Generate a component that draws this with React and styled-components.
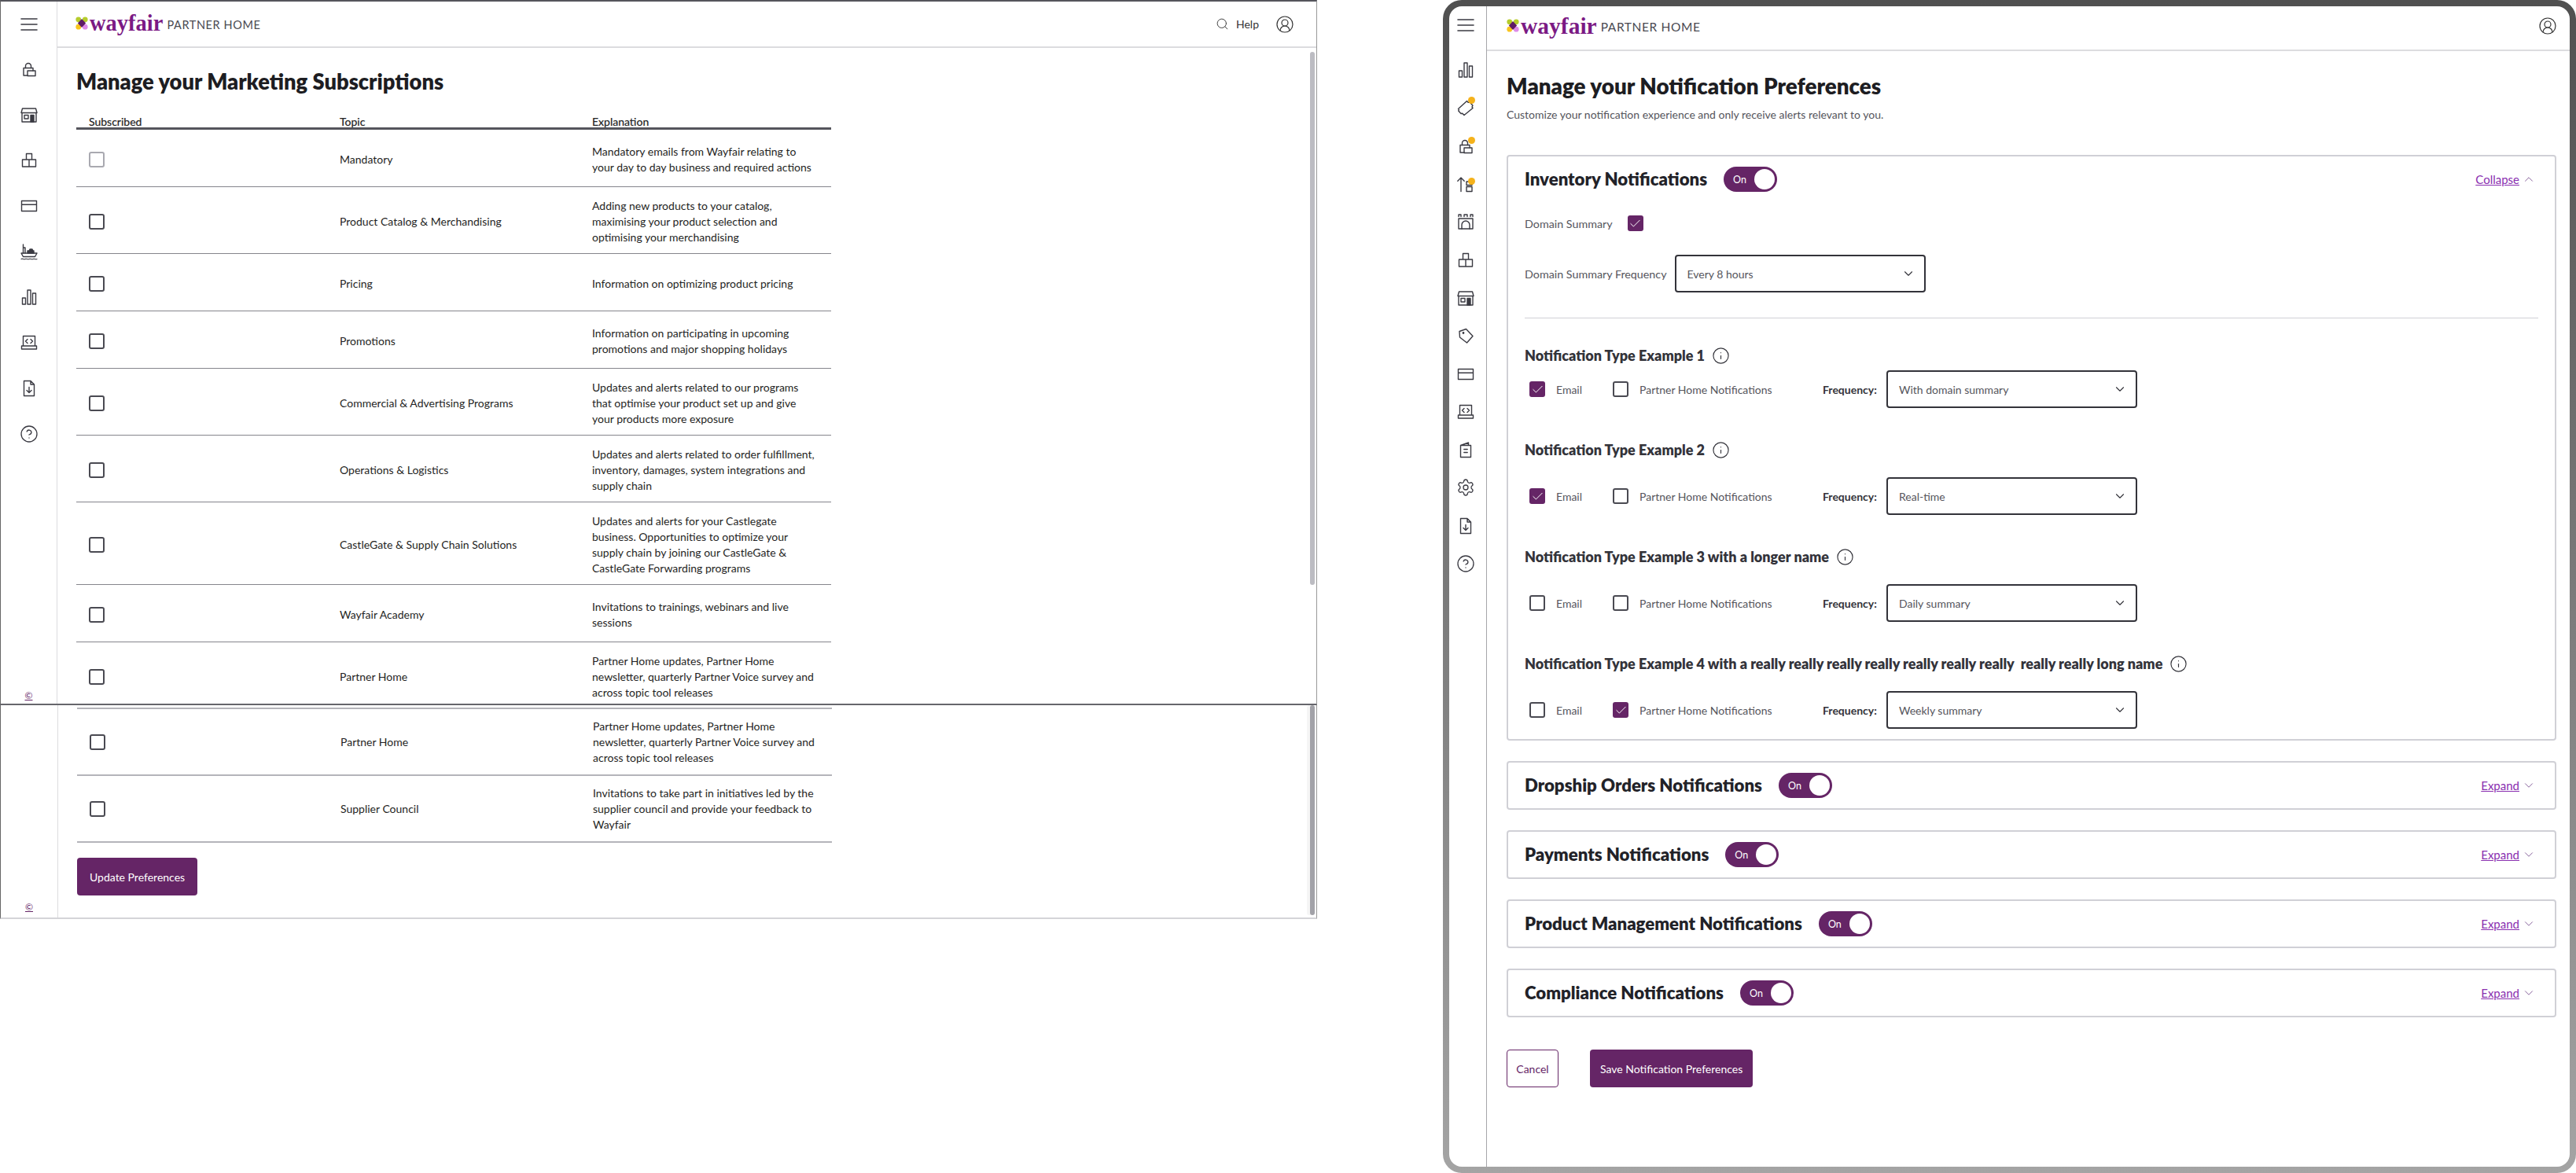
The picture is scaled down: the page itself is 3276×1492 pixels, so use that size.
import React from 'react';
import styled, { createGlobalStyle } from 'styled-components';
import { Check, ChevronDown, ChevronUp, CircleHelp, CircleUserRound, Info, Search, Settings } from 'lucide-react';

const PURPLE = '#652566';

const GlobalStyle = createGlobalStyle`
  html, body { margin: 0; padding: 0; background: #fff; }
  body { font-family: Lato, "Open Sans", sans-serif; color: #222; }
  * { box-sizing: border-box; }
`;

const Page = styled.div`
  width: 3276px;
  height: 1492px;
  display: flex;
  justify-content: space-between;
  align-items: flex-start;
  overflow: hidden;
`;

/* ---------- left screenshot ---------- */

const LeftColumn = styled.div`
  width: 1675px;
  display: flex;
  flex-direction: column;
`;

const Shot = styled.section`
  position: relative;
  height: ${p => p.$height}px;
  display: flex;
  overflow: hidden;
  border-left: 1px solid #666;
  border-right: 1px solid #999;
  border-top: ${p => p.$top};
  border-bottom: ${p => p.$bottom};
`;

const ScrollThumb = styled.div`
  position: absolute;
  right: 2px;
  top: ${p => p.$top}px;
  bottom: ${p => p.$bottom}px;
  width: 6px;
  border-radius: 3px;
  background: ${p => p.$color};
  box-shadow: ${p => p.$track ? '-4px 0 0 #f5f5f5' : 'none'};
`;

const Rail = styled.nav`
  width: ${p => p.$width}px;
  flex: none;
  display: flex;
  flex-direction: column;
  align-items: center;
  border-right: ${p => p.$border};
  padding-right: ${p => p.$shift || 0}px;
`;

const RailHead = styled.div`
  height: ${p => p.$height}px;
  margin-bottom: ${p => p.$after || 0}px;
  display: flex;
  align-items: center;
`;

const RailSlot = styled.div`
  position: relative;
  height: ${p => p.$step}px;
  display: flex;
  align-items: center;
  justify-content: center;
  color: #3a3a42;
`;

const Dot = styled.span`
  position: absolute;
  top: ${p => p.$top}px;
  right: 0;
  width: 9px;
  height: 9px;
  border-radius: 50%;
  background: #f5b21b;
`;

const Copyright = styled.a`
  margin-top: auto;
  margin-bottom: ${p => p.$bottom}px;
  font-size: 12px;
  line-height: 14px;
  color: ${PURPLE};
  text-decoration: underline;
`;

const Main = styled.div`
  flex: 1;
  min-width: 0;
  display: flex;
  flex-direction: column;
`;

const TopBar = styled.header`
  height: ${p => p.$height}px;
  flex: none;
  display: flex;
  align-items: center;
  justify-content: space-between;
  padding: ${p => p.$padding};
  border-bottom: 2px solid #dcdcdf;
`;

const Logo = styled.div`
  display: flex;
  align-items: center;
  margin-bottom: ${p => p.$lift}px;
`;

const Wordmark = styled.span`
  font-family: "Liberation Serif", serif;
  font-weight: 700;
  font-size: ${p => p.$size}px;
  line-height: 24px;
  color: #7b1a84;
  margin-left: 2px;
`;

const LogoSub = styled.span`
  font-size: ${p => p.$size}px;
  letter-spacing: 0.6px;
  color: #4a4a52;
  margin-left: 5px;
  margin-top: 3px;
`;

const TopActions = styled.div`
  display: flex;
  align-items: center;
  color: #333;
  font-size: 14px;
`;

const HelpLabel = styled.span`
  margin: 0 21px 0 9px;
`;

const AccountIcon = styled.span`
  display: flex;
  color: #333;
  margin-bottom: ${p => p.$lift || 0}px;
`;

const TablePane = styled.div`
  padding: ${p => p.$padding};
`;

const MarketingTitle = styled.h1`
  margin: 0;
  font-size: 27.3px;
  line-height: 34px;
  font-weight: 800;
  color: #1d1d22;
`;

const TableHead = styled.div`
  width: 960px;
  margin-top: 26px;
  display: grid;
  grid-template-columns: 319px 321px 1fr;
  padding-left: 16px;
  font-size: 14px;
  line-height: 15px;
  color: #222;
  border-bottom: 3px solid #55555c;
  -webkit-text-stroke: 0.2px #222;
`;

const TableRow = styled.div`
  width: 960px;
  min-height: 73px;
  display: grid;
  grid-template-columns: 319px 321px 1fr;
  align-items: center;
  padding: ${p => p.$soft ? '12px 0 11px 16px' : '14px 0 10px 16px'};
  font-size: 14px;
  line-height: 20px;
  color: #1f1f24;
  border-bottom: ${p => p.$soft ? '2px solid #b4b4ba' : '1px solid #85858c'};
`;

const SoftRule = styled.div`
  width: 960px;
  border-top: 2px solid #b4b4ba;
`;

const Explanation = styled.div`
  max-width: 288px;
`;

const PrimaryButton = styled.button`
  height: 48px;
  padding: 0 ${p => p.$pad}px;
  border: none;
  border-radius: 4px;
  background: ${PURPLE};
  color: #fff;
  font-family: inherit;
  font-size: 14px;
`;

const UpdateButton = styled(PrimaryButton)`
  display: block;
  margin-top: 19px;
`;

const Box = styled.span`
  width: 20px;
  height: 20px;
  flex: none;
  display: inline-flex;
  align-items: center;
  justify-content: center;
  border-radius: 3px;
  border: ${p => p.$checked ? 'none' : `2px solid ${p.$muted ? '#a9a9b0' : '#4a4a52'}`};
  background: ${p => p.$checked ? PURPLE : '#fff'};
  color: #fff;
`;

/* ---------- right screenshot ---------- */

const Device = styled.section`
  width: 1441px;
  height: 1492px;
  padding: 8px;
  border-radius: 24px;
  background: linear-gradient(#505050, #a4a4a4);
`;

const Screen = styled.div`
  height: 100%;
  display: flex;
  overflow: hidden;
  border-radius: 16px;
  background: #fff;
`;

const PrefsPane = styled.div`
  padding: 27px 17px 0 25px;
`;

const PrefsTitle = styled.h1`
  margin: 0;
  font-size: 27.8px;
  line-height: 36px;
  font-weight: 800;
  color: #1d1d22;
`;

const PrefsIntro = styled.p`
  margin: 8px 0 41px;
  font-size: 14px;
  line-height: 20px;
  color: #55555c;
`;

const Card = styled.div`
  margin-bottom: 26px;
  padding: 13px 21px;
  border: 2px solid #d0d0d6;
  border-radius: 4px;
`;

const CardHead = styled.div`
  display: flex;
  align-items: center;
`;

const CardTitle = styled.h2`
  margin: 0 21px 0 0;
  font-size: 22.2px;
  line-height: 32px;
  font-weight: 800;
  color: #222228;
`;

const Toggle = styled.span`
  width: 68px;
  height: 32px;
  display: flex;
  align-items: center;
  justify-content: space-between;
  padding: 0 3px 0 12px;
  border-radius: 16px;
  background: ${PURPLE};
  color: #fff;
  font-size: 12.5px;
`;

const Knob = styled.span`
  width: 26px;
  height: 26px;
  border-radius: 50%;
  background: #fff;
`;

const CardLink = styled.a`
  margin-left: auto;
  margin-right: 3px;
  display: flex;
  align-items: center;
  gap: 3px;
  color: #86609a;
`;

const LinkText = styled.span`
  font-size: 15px;
  color: #8a2fb0;
  text-decoration: underline;
`;

const FieldLine = styled.div`
  margin-top: ${p => p.$gap}px;
  display: flex;
  align-items: center;
  gap: ${p => p.$inner}px;
  font-size: 14.3px;
  color: #55555c;
`;

const Select = styled.div`
  width: 319px;
  height: 48px;
  flex: none;
  display: flex;
  align-items: center;
  justify-content: space-between;
  padding: 0 11px 0 14px;
  border: 2px solid #33333a;
  border-radius: 4px;
  font-size: 14px;
  color: #55555c;
`;

const Rule = styled.hr`
  margin: 32px 0 0;
  border: none;
  border-top: 1px solid #d0d0d6;
`;

const TypeGroup = styled.div`
  margin-top: ${p => p.$first ? 35 : 41}px;
`;

const TypeTitle = styled.h3`
  margin: 0 0 ${p => p.$first ? 7 : 23}px;
  display: flex;
  align-items: center;
  gap: 9px;
  font-size: 18px;
  line-height: 24px;
  font-weight: 800;
  color: #33333a;
  white-space: pre;
`;

const TypeRow = styled.div`
  display: grid;
  grid-template-columns: 106px 267px 81px 319px;
  align-items: center;
  padding-left: 6px;
`;

const CheckOption = styled.label`
  display: flex;
  align-items: center;
  gap: 14px;
  font-size: 14px;
  color: #55555c;
`;

const FreqLabel = styled.span`
  font-size: 14px;
  font-weight: 700;
  color: #33333a;
`;

const ActionRow = styled.div`
  display: flex;
  gap: 40px;
  margin-top: 41px;
`;

const CancelButton = styled.button`
  height: 48px;
  width: 66px;
  background: #fff;
  border: 1px solid ${PURPLE};
  border-radius: 4px;
  color: ${PURPLE};
  font-family: inherit;
  font-size: 14px;
`;

/* ---------- drawings ---------- */

const Svg = ({ size = 24, children }) => (
  <svg width={size} height={size} viewBox="0 0 24 24" fill="none" stroke="currentColor" strokeWidth="1.4" strokeLinejoin="round" strokeLinecap="round">
    {children}
  </svg>
);

const drawings = {
  menu: <path d="M2 5h20M2 12h20M2 19h20" strokeWidth="1.6" />,
  bars: <path d="M3.5 13h4v8h-4zM10 3h4v18h-4zM16.500 7h4v14h-4z" />,
  lockbox: (
    <>
      <path d="M10 20H5V10.500h12V14" />
      <path d="M7.500 10.500V8a3.500 3.500 0 0 1 7 0v2.500" />
      <path d="M10 14h10v6.500H10z" />
    </>
  ),
  store: (
    <>
      <path d="M3.500 4h17L22 9.500H2z" />
      <path d="M3 9.500V21h18V9.500" />
      <path d="M6 12.500h5V17H6z" />
      <path d="M14 12.500h4V21h-4z" fill="currentColor" />
    </>
  ),
  boxes: <path d="M8.500 3.500h7V11h-7zM3.500 11H12v9H3.500zM12 11h8.500v9H12z" />,
  card: <path d="M2.500 5.500h19v13h-19zM2.500 10.200h19" />,
  ship: (
    <>
      <path d="M4.500 3v11M4.500 7H7v7" />
      <path d="M2 14h20l-2.500 4.500h-15z" />
      <path d="M10 14v-3h2l1-2h3l1 2h1v3z" fill="currentColor" />
      <path d="M2 21.500c2-1.400 3 1 5 0s3 1 5 0 3 1 5 0 3 1 5 0" strokeWidth="1.100" />
    </>
  ),
  laptop: <path d="M4.500 3.500h15V16h-15zM2.500 16h19v4h-19zM10 7.500l-2.500 2.500 2.500 2.500M14 7.500l2.500 2.500-2.500 2.500" />,
  filedown: <path d="M5.500 2.500H14l4.500 4.500v14.500h-13zM14 2.500V7h4.500M12 10.500v7M9 14.500l3 3 3-3" />,
  ticket: <path d="M2.500 13.500L13.500 3.500l1.800 1.900 2-.4 3.700 4.200-1 1.800 1 1.500L10 21.500 7.800 19.200 6 19.500 2.800 16l.7-1.500z" />,
  arrowstack: <path d="M6 21.500V4M1.800 8.200L6 4l4.200 4.200M13 9h7v4.500h-7zM13 15.500h7v6h-7z" />,
  castle: (
    <>
      <path d="M3 3v2.500M6 3v2.500M3 3h3M10 3v2.500M14 3v2.500M10 3h4M18 3v2.500M21 3v2.500M18 3h3" />
      <path d="M3 8h18v13H3z" />
      <path d="M7 21v-5a5 5 0 0 1 10 0v5" />
    </>
  ),
  tag: (
    <>
      <path d="M4 6.500L12.500 3.500 21 12.500l-7.500 8.500L4.500 14z" />
      <circle cx="9" cy="8.500" r=".7" fill="currentColor" />
    </>
  ),
  notes: <path d="M5.500 6.500l10-3.500v3.500M5.500 6.500h13v15h-13zM9.800 11.500h4.400M9.800 15.500h4.400" />,
};

const Glyph = ({ name }) => {
  if (name === 'gear') return <Settings size={24} strokeWidth={1.3} />;
  if (name === 'help') return <CircleHelp size={24} strokeWidth={1.3} />;
  return <Svg>{drawings[name]}</Svg>;
};

const LogoMark = () => (
  <svg width="16" height="17" viewBox="0 0 17 18">
    <circle cx="4" cy="4" r="3.600" fill="#b6cc2c" />
    <circle cx="13" cy="4" r="3.600" fill="#b6cc2c" />
    <circle cx="4" cy="14" r="3.600" fill="#f9c51e" />
    <circle cx="13" cy="14" r="3.600" fill="#dd8be8" />
    <path d="M8.500 3.200L14 9l-5.500 5.800L3 9z" fill="#5d1a66" />
  </svg>
);

const Brand = ({ word, sub, lift }) => (
  <Logo $lift={lift}>
    <LogoMark />
    <Wordmark $size={word}>wayfair</Wordmark>
    <LogoSub $size={sub}>PARTNER HOME</LogoSub>
  </Logo>
);

const CheckBox = ({ checked, muted }) => (
  <Box $checked={checked} $muted={muted}>
    {checked && <Check size={17} strokeWidth={1.4} />}
  </Box>
);

/* ---------- data ---------- */

const topRows = [
  ['Mandatory', 'Mandatory emails from Wayfair relating to your day to day business and required actions', true],
  ['Product Catalog & Merchandising', 'Adding new products to your catalog, maximising your product selection and optimising your merchandising'],
  ['Pricing', 'Information on optimizing product pricing'],
  ['Promotions', 'Information on participating in upcoming promotions and major shopping holidays'],
  ['Commercial & Advertising Programs', 'Updates and alerts related to our programs that optimise your product set up and give your products more exposure'],
  ['Operations & Logistics', 'Updates and alerts related to order fulfillment, inventory, damages, system integrations and supply chain'],
  ['CastleGate & Supply Chain Solutions', 'Updates and alerts for your Castlegate business. Opportunities to optimize your supply chain by joining our CastleGate & CastleGate Forwarding programs'],
  ['Wayfair Academy', 'Invitations to trainings, webinars and live sessions'],
  ['Partner Home', 'Partner Home updates, Partner Home newsletter, quarterly Partner Voice survey and across topic tool releases'],
];

const bottomRows = [
  ['Partner Home', 'Partner Home updates, Partner Home newsletter, quarterly Partner Voice survey and across topic tool releases'],
  ['Supplier Council', 'Invitations to take part in initiatives led by the supplier council and provide your feedback to Wayfair'],
];

const leftIcons = ['lockbox', 'store', 'boxes', 'card', 'ship', 'bars', 'laptop', 'filedown', 'help'];

const rightIcons = [
  ['bars'], ['ticket', 1], ['lockbox', 3], ['arrowstack', 7], ['castle'], ['boxes'], ['store'], ['tag'],
  ['card'], ['laptop'], ['notes'], ['gear'], ['filedown'], ['help'],
];

const types = [
  { title: 'Notification Type Example 1', email: true, home: false, freq: 'With domain summary' },
  { title: 'Notification Type Example 2', email: true, home: false, freq: 'Real-time' },
  { title: 'Notification Type Example 3 with a longer name', email: false, home: false, freq: 'Daily summary' },
  { title: 'Notification Type Example 4 with a really really really really really really really  really really long name', email: false, home: true, freq: 'Weekly summary' },
];

const closedCards = ['Dropship Orders Notifications', 'Payments Notifications', 'Product Management Notifications', 'Compliance Notifications'];

const Row = ({ topic, text, muted, soft }) => (
  <TableRow $soft={soft}>
    <CheckBox muted={muted} />
    <div>{topic}</div>
    <Explanation>{text}</Explanation>
  </TableRow>
);

const SectionHead = ({ title, open }) => (
  <CardHead>
    <CardTitle>{title}</CardTitle>
    <Toggle>On<Knob /></Toggle>
    <CardLink>
      <LinkText>{open ? 'Collapse' : 'Expand'}</LinkText>
      {open ? <ChevronUp size={18} strokeWidth={1.3} /> : <ChevronDown size={18} strokeWidth={1.3} />}
    </CardLink>
  </CardHead>
);

const FrequencySelect = ({ value }) => (
  <Select>
    {value}
    <ChevronDown size={18} strokeWidth={1.5} color="#33333a" />
  </Select>
);

export default function App() {
  return (
    <Page>
      <GlobalStyle />
      <LeftColumn>
        <Shot $height={897} $top="2px solid #55555c" $bottom="2px solid #66666c">
          <ScrollThumb $top={64} $bottom={151} $color="#bcbcc2" />
          <Rail $width={72} $border="1px solid #dcdcdf">
            <RailHead $height={57}><RailSlot $step={57}><Glyph name="menu" /></RailSlot></RailHead>
            {leftIcons.map(name => (
              <RailSlot key={name} $step={58}><Glyph name={name} /></RailSlot>
            ))}
            <Copyright $bottom={3}>©</Copyright>
          </Rail>
          <Main>
            <TopBar $height={59} $padding="0 28px 0 23px">
              <Brand word={28.5} sub={14.5} lift={2} />
              <TopActions>
                <Search size={17} strokeWidth={1.3} />
                <HelpLabel>Help</HelpLabel>
                <AccountIcon><CircleUserRound size={24} strokeWidth={1.2} /></AccountIcon>
              </TopActions>
            </TopBar>
            <TablePane $padding="26px 0 0 24px">
              <MarketingTitle>Manage your Marketing Subscriptions</MarketingTitle>
              <TableHead>
                <div>Subscribed</div>
                <div>Topic</div>
                <div>Explanation</div>
              </TableHead>
              {topRows.map(([topic, text, muted]) => (
                <Row key={topic} topic={topic} text={text} muted={muted} />
              ))}
            </TablePane>
          </Main>
        </Shot>
        <Shot $height={272} $top="none" $bottom="2px solid #d4d4d8">
          <ScrollThumb $top={0} $bottom={3} $color="#a2a2a8" $track />
          <Rail $width={73} $border="1px solid #dcdcdf">
            <Copyright $bottom={6}>©</Copyright>
          </Rail>
          <Main>
            <TablePane $padding="3px 0 0 24px">
              <SoftRule />
              {bottomRows.map(([topic, text]) => (
                <Row key={topic} topic={topic} text={text} soft />
              ))}
              <UpdateButton $pad={16}>Update Preferences</UpdateButton>
            </TablePane>
          </Main>
        </Shot>
      </LeftColumn>

      <Device>
        <Screen>
          <Rail $width={48} $border="1px solid #a6a6aa" $shift={6}>
            <RailHead $height={48} $after={9}><RailSlot $step={48}><Glyph name="menu" /></RailSlot></RailHead>
            {rightIcons.map(([name, dotTop]) => (
              <RailSlot key={name} $step={48.3}>
                <Glyph name={name} />
                {dotTop !== undefined && <Dot $top={dotTop + 9} />}
              </RailSlot>
            ))}
          </Rail>
          <Main>
            <TopBar $height={57} $padding="0 16px 0 25px">
              <Brand word={29.5} sub={15.5} lift={6} />
              <AccountIcon $lift={6}><CircleUserRound size={24} strokeWidth={1.2} /></AccountIcon>
            </TopBar>
            <PrefsPane>
              <PrefsTitle>Manage your Notification Preferences</PrefsTitle>
              <PrefsIntro>Customize your notification experience and only receive alerts relevant to you.</PrefsIntro>
              <Card>
                <SectionHead title="Inventory Notifications" open />
                <FieldLine $gap={30} $inner={19}>
                  Domain Summary
                  <CheckBox checked />
                </FieldLine>
                <FieldLine $gap={30} $inner={10}>
                  Domain Summary Frequency
                  <FrequencySelect value="Every 8 hours" />
                </FieldLine>
                <Rule />
                {types.map((t, i) => (
                  <TypeGroup key={t.title} $first={i === 0}>
                    <TypeTitle $first={i === 0}>
                      {t.title}
                      <Info size={23} strokeWidth={1.2} />
                    </TypeTitle>
                    <TypeRow>
                      <CheckOption><CheckBox checked={t.email} />Email</CheckOption>
                      <CheckOption><CheckBox checked={t.home} />Partner Home Notifications</CheckOption>
                      <FreqLabel>Frequency:</FreqLabel>
                      <FrequencySelect value={t.freq} />
                    </TypeRow>
                  </TypeGroup>
                ))}
              </Card>
              {closedCards.map(title => (
                <Card key={title}>
                  <SectionHead title={title} />
                </Card>
              ))}
              <ActionRow>
                <CancelButton>Cancel</CancelButton>
                <PrimaryButton $pad={13}>Save Notification Preferences</PrimaryButton>
              </ActionRow>
            </PrefsPane>
          </Main>
        </Screen>
      </Device>
    </Page>
  );
}
